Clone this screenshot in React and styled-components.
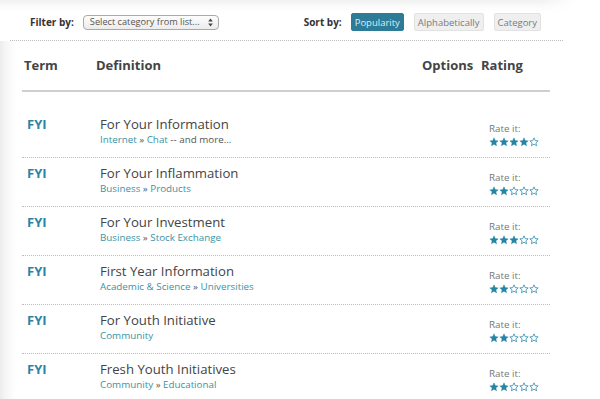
import React from "react";
import styled, { createGlobalStyle } from "styled-components";

const Global = createGlobalStyle`
  html, body { margin: 0; padding: 0; background: #fff; }
  body { font-family: "Open Sans", "Noto Sans", "DejaVu Sans", sans-serif; color: #444; }
  * { box-sizing: border-box; }
`;

const Page = styled.div`
  width: 600px;
  height: 399px;
  overflow: hidden;
  background: #fff;
`;

const Top = styled.div`
  background: linear-gradient(to right, rgba(255,255,255,0) 0, rgba(255,255,255,0) 540px, #fff 575px),
    linear-gradient(#f1f1f1 0, #fafafa 6px, #fff 12px);
`;

const Toolbar = styled.div`
  height: 40px;
  width: 541px;
  padding: 4px 0 0 30px;
  display: flex;
  align-items: center;
  justify-content: space-between;
`;

const Group = styled.div`
  display: flex;
  align-items: center;
  gap: ${(p) => p.$gap || 9}px;
`;

const Label = styled.span`
  font-size: 10px;
  font-weight: 700;
  color: #333;
  white-space: nowrap;
  margin-right: ${(p) => p.$mr || 0}px;
`;

const Select = styled.div`
  width: 136px;
  height: 15px;
  border: 1px solid #a9a9a9;
  border-radius: 4px;
  background: linear-gradient(#fdfdfd, #ececec);
  font-size: 9.2px;
  color: #555;
  display: flex;
  align-items: center;
  gap: 3px;
  justify-content: space-between;
  padding: 0 5px 0 6px;
  line-height: 1;
  white-space: nowrap;
`;

const SortButton = styled.div`
  height: 18px;
  padding: 0 3px;
  display: flex;
  align-items: center;
  font-size: 9.5px;
  white-space: nowrap;
  border-radius: 2px;
  background: ${(p) => (p.$active ? "#2e7b98" : "#efefef")};
  color: ${(p) => (p.$active ? "#d8eef5" : "#7a7a7a")};
  border: 1px solid ${(p) => (p.$active ? "#2e7b98" : "#e2e2e2")};
`;

const Divider = styled.div`
  margin-left: 10px;
  width: 553px;
  border-top: 1px dotted #bdbdbd;
`;

const Main = styled.div`
  background: linear-gradient(to right, #ececec 0, #f6f6f6 6px, #fff 16px);
  padding-left: 22px;
  padding-bottom: 40px;
`;

const Table = styled.div`
  width: 528px;
  background: #fff;
`;

const Header = styled.div`
  display: flex;
  height: 51px;
  padding: 15px 0 0 2px;
  border-bottom: 2px solid #cfcfcf;
  font-size: 13px;
  font-weight: 700;
  line-height: 18px;
  color: #444;
`;

const HeadCell = styled.div`
  width: ${(p) => (p.$w ? p.$w + "px" : "auto")};
  flex: ${(p) => (p.$w ? "none" : 1)};
`;

const Body = styled.div`
  margin-top: 17px;
`;

const Row = styled.div`
  display: flex;
  padding: 6px 0 10px 5px;
  border-bottom: 1px dotted #bdbdbd;
`;

const Term = styled.div`
  width: 73px;
  font-size: 13px;
  font-weight: 700;
  color: #2a83a3;
  line-height: 18px;
`;

const Def = styled.div`
  flex: 1;
`;

const Title = styled.div`
  font-size: 13.2px;
  line-height: 18px;
  color: #444;
`;

const Cats = styled.div`
  font-size: 9.8px;
  line-height: 14px;
  color: #555;
`;

const Cat = styled.span`
  color: #3a92a6;
`;

const Rating = styled.div`
  width: 61px;
  padding-top: 8px;
`;

const RateLabel = styled.div`
  font-size: 9.8px;
  line-height: 12px;
  color: #777;
`;

const Stars = styled.div`
  display: flex;
  margin-top: 2px;
`;

const Arrows = () => (
  <svg width="5" height="9" viewBox="0 0 5 9">
    <polygon points="2.5,0.5 4.8,3.5 0.2,3.5" fill="#444" />
    <polygon points="0.2,5.5 4.8,5.5 2.5,8.5" fill="#444" />
  </svg>
);

const Star = ({ filled }) => (
  <svg width="10" height="10" viewBox="0 0 24 24">
    <polygon
      points="12,2 14.9,8.6 22,9.3 16.6,14 18.2,21 12,17.3 5.8,21 7.4,14 2,9.3 9.1,8.6"
      fill={filled ? "#2585a5" : "#fff"}
      stroke="#2585a5"
      strokeWidth={filled ? 1 : 1.8}
      strokeLinejoin="round"
    />
  </svg>
);

const rows = [
  { title: "For Your Information", cats: ["Internet", "Chat"], more: true, stars: 4 },
  { title: "For Your Inflammation", cats: ["Business", "Products"], stars: 2 },
  { title: "For Your Investment", cats: ["Business", "Stock Exchange"], stars: 3 },
  { title: "First Year Information", cats: ["Academic & Science", "Universities"], stars: 2 },
  { title: "For Youth Initiative", cats: ["Community"], stars: 2 },
  { title: "Fresh Youth Initiatives", cats: ["Community", "Educational"], stars: 2 },
];

export default function App() {
  return (
    <Page>
      <Global />
      <Top>
        <Toolbar>
          <Group>
            <Label>Filter by:</Label>
            <Select>
              <span>Select category from list...</span>
              <Arrows />
            </Select>
          </Group>
          <Group $gap={10}>
            <Label $mr={-1}>Sort by:</Label>
            <SortButton $active>Popularity</SortButton>
            <SortButton>Alphabetically</SortButton>
            <SortButton>Category</SortButton>
          </Group>
        </Toolbar>
        <Divider />
      </Top>
      <Main>
        <Table>
          <Header>
            <HeadCell $w={72}>Term</HeadCell>
            <HeadCell>Definition</HeadCell>
            <HeadCell $w={59}>Options</HeadCell>
            <HeadCell $w={69}>Rating</HeadCell>
          </Header>
          <Body>
            {rows.map((r, i) => (
              <Row key={i}>
                <Term>FYI</Term>
                <Def>
                  <Title>{r.title}</Title>
                  <Cats>
                    {r.cats.map((c, j) => (
                      <React.Fragment key={j}>
                        {j > 0 && " » "}
                        <Cat>{c}</Cat>
                      </React.Fragment>
                    ))}
                    {r.more && " -- and more..."}
                  </Cats>
                </Def>
                <Rating>
                  <RateLabel>Rate it:</RateLabel>
                  <Stars>
                    {[0, 1, 2, 3, 4].map((k) => (
                      <Star key={k} filled={k < r.stars} />
                    ))}
                  </Stars>
                </Rating>
              </Row>
            ))}
          </Body>
        </Table>
      </Main>
    </Page>
  );
}
